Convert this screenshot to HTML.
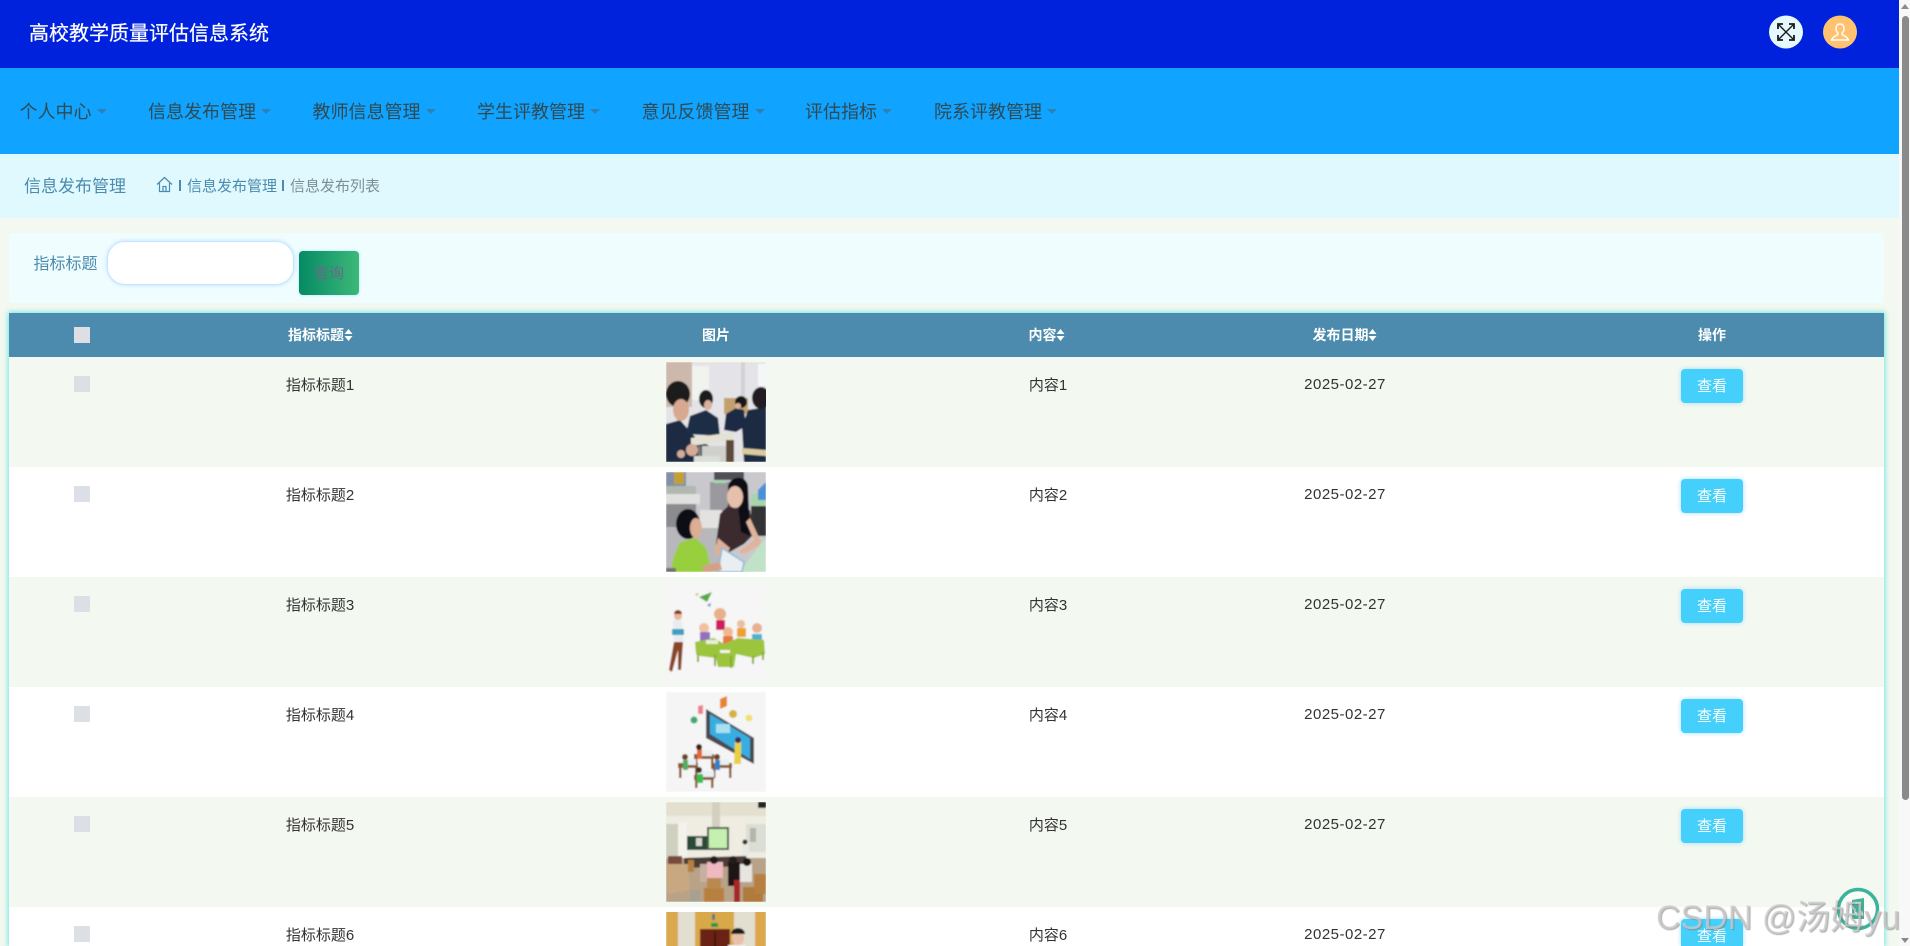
<!DOCTYPE html>
<html lang="zh-CN"><head><meta charset="utf-8"><title>高校教学质量评估信息系统</title>
<style>
*{box-sizing:border-box;margin:0;padding:0}
html,body{width:1910px;height:946px;overflow:hidden;background:#f3f8f0;font-family:"Liberation Sans","Noto Sans CJK SC",sans-serif}
.a{position:absolute;white-space:nowrap}
#page{position:relative;width:1910px;height:946px;overflow:hidden}
.nav{font-size:18px;line-height:24px;top:100px;color:#2f4a52}
.nav i{display:inline-block;width:0;height:0;border:5px solid transparent;border-top:5px solid #2b82b5;border-bottom:0;margin-left:5px;vertical-align:4px}
.cb{position:absolute;left:74px;width:16px;height:16px;background:#dcdfe6}
.row{position:absolute;left:9px;width:1875px;height:110px}
.t{position:absolute;font-size:15px;line-height:20px;color:#333;transform:translateX(-50%);white-space:nowrap}
.d{letter-spacing:.5px}
.th{position:absolute;top:325px;font-size:14px;line-height:20px;font-weight:700;color:#fff;transform:translateX(-50%);white-space:nowrap}
.th b{display:inline-block;vertical-align:-1px;width:9px;height:12px;position:relative}
.th b:before{content:"";position:absolute;left:0;top:0;border:4.500px solid transparent;border-bottom:5px solid #fff;border-top:0}
.th b:after{content:"";position:absolute;left:0;bottom:0;border:4.500px solid transparent;border-top:5px solid #fff;border-bottom:0}
.btn{position:absolute;left:1681px;width:62px;height:34px;border-radius:4px;background:#45d0fb;color:#fff;font-size:15px;line-height:36px;text-align:center;box-shadow:0 0 5px #9fdcff;overflow:hidden}
.im{position:absolute;left:666px;width:100px;height:100px;display:block}
</style></head><body><div id="page">

<div class="a" style="left:0;top:0;width:1899px;height:68px;background:#0022dd"></div>
<div class="a" style="left:29px;top:19px;font-size:20px;line-height:30px;color:#fff;-webkit-text-stroke:.2px #fff">高校教学质量评估信息系统</div>

<svg class="a" style="left:1769px;top:15px" width="34" height="34" viewBox="0 0 34 34"><ellipse cx="17" cy="17" rx="17" ry="16.5" fill="#e6f9ff"/><path d="M10 10L24 24M24 10L10 24" stroke="#1a1a1a" stroke-width="1.4" fill="none"/><path d="M9 14V9H14M20 9H25V14M25 20V25H20M14 25H9V20" stroke="#1a1a1a" stroke-width="1.8" fill="none"/></svg>
<svg class="a" style="left:1823px;top:15px" width="34" height="34" viewBox="0 0 34 34"><ellipse cx="17" cy="17" rx="17" ry="16.5" fill="#ffc271"/><path d="M17 9c-2.600 0-4 2-4 4.500 0 2 .8 3.500 1.800 4.500v1.500c-1.500 1.500-5 1.800-6.300 5.500h17c-1.300-3.700-4.800-4-6.300-5.500V18c1-1 1.800-2.500 1.800-4.500C21 11 19.600 9 17 9z" fill="none" stroke="#fff" stroke-width="1.400"/></svg>

<div class="a" style="left:0;top:68px;width:1899px;height:86px;background:#10a3ff"></div>
<div class="a nav" style="left:19.500px">个人中心<i></i></div>
<div class="a nav" style="left:148px">信息发布管理<i></i></div>
<div class="a nav" style="left:312.500px">教师信息管理<i></i></div>
<div class="a nav" style="left:477px">学生评教管理<i></i></div>
<div class="a nav" style="left:641.500px">意见反馈管理<i></i></div>
<div class="a nav" style="left:805px">评估指标<i></i></div>
<div class="a nav" style="left:934px">院系评教管理<i></i></div>

<div class="a" style="left:0;top:154px;width:1899px;height:64px;background:#dff9ff"></div>
<div class="a" style="left:24px;top:175px;font-size:17px;line-height:24px;color:#4c8bad">信息发布管理</div>
<svg class="a" style="left:156px;top:176px" width="17" height="17" viewBox="0 0 17 17"><path d="M1 8.500L8.500 1.500L16 8.500M3.500 7V15.500H13.500V7M7 15.500V10.500H10V15.500" fill="none" stroke="#4c8bad" stroke-width="1.200"/></svg>
<div class="a" style="left:179px;top:180px;width:2px;height:11px;background:#4c8bad"></div>
<div class="a" style="left:187px;top:176px;font-size:15px;line-height:22px;color:#4c8bad">信息发布管理</div>
<div class="a" style="left:282px;top:180px;width:2px;height:11px;background:#4c8bad"></div>
<div class="a" style="left:290px;top:176px;font-size:15px;line-height:22px;color:#7c8f97">信息发布列表</div>

<div class="a" style="left:9px;top:233px;width:1875px;height:70px;background:#f0fdff"></div>
<div class="a" style="left:33.500px;top:254px;font-size:16px;line-height:22px;color:#4c8bad">指标标题</div>
<div class="a" style="left:107px;top:241px;width:187px;height:44px;background:#fff;border-radius:18px;border:1px solid #c6e6ff;box-shadow:0 0 4px #b5dcff"></div>
<div class="a" style="left:299px;top:251px;width:60px;height:44px;border-radius:4px;background:linear-gradient(90deg,#058a64,#3cb878);box-shadow:0 0 3px #a8e0ff"></div>
<div class="a" style="left:314px;top:263px;font-size:15px;line-height:22px;color:#6a6a86">查询</div>

<div class="a" style="left:9px;top:313px;width:1875px;height:633px;box-shadow:0 0 5px 1px #6fe8e0"></div>
<div class="a" style="left:9px;top:313px;width:1875px;height:44px;background:#4c8bad"></div>
<div class="row" style="top:357px;background:#f3f8f0"></div>
<div class="row" style="top:467px;background:#fff"></div>
<div class="row" style="top:577px;background:#f3f8f0"></div>
<div class="row" style="top:687px;background:#fff"></div>
<div class="row" style="top:797px;background:#f3f8f0"></div>
<div class="row" style="top:907px;height:39px;background:#fff"></div>

<div class="cb" style="top:327px"></div>
<div class="th" style="left:320.500px">指标标题<b></b></div>
<div class="th" style="left:716px">图片</div>
<div class="th" style="left:1047px">内容<b></b></div>
<div class="th" style="left:1345px">发布日期<b></b></div>
<div class="th" style="left:1712px">操作</div>

<div class="cb" style="top:376px"></div><div class="t" style="left:320px;top:376px">指标标题1</div><div class="t" style="left:1048px;top:376px">内容1</div><div class="t d" style="left:1345px;top:375px">2025-02-27</div><div class="btn" style="top:369px">查看</div>
<div class="cb" style="top:486px"></div><div class="t" style="left:320px;top:486px">指标标题2</div><div class="t" style="left:1048px;top:486px">内容2</div><div class="t d" style="left:1345px;top:485px">2025-02-27</div><div class="btn" style="top:479px">查看</div>
<div class="cb" style="top:596px"></div><div class="t" style="left:320px;top:596px">指标标题3</div><div class="t" style="left:1048px;top:596px">内容3</div><div class="t d" style="left:1345px;top:595px">2025-02-27</div><div class="btn" style="top:589px">查看</div>
<div class="cb" style="top:706px"></div><div class="t" style="left:320px;top:706px">指标标题4</div><div class="t" style="left:1048px;top:706px">内容4</div><div class="t d" style="left:1345px;top:705px">2025-02-27</div><div class="btn" style="top:699px">查看</div>
<div class="cb" style="top:816px"></div><div class="t" style="left:320px;top:816px">指标标题5</div><div class="t" style="left:1048px;top:816px">内容5</div><div class="t d" style="left:1345px;top:815px">2025-02-27</div><div class="btn" style="top:809px">查看</div>
<div class="cb" style="top:926px"></div><div class="t" style="left:320px;top:926px">指标标题6</div><div class="t" style="left:1048px;top:926px">内容6</div><div class="t d" style="left:1345px;top:925px">2025-02-27</div><div class="btn" style="top:919px;height:27px;border-radius:4px 4px 0 0">查看</div>

<svg width="0" height="0" style="position:absolute"><filter id="b" x="-5%" y="-5%" width="110%" height="110%"><feGaussianBlur stdDeviation=".8"/></filter><clipPath id="c"><rect width="100" height="100"/></clipPath></svg>

<svg class="im" style="top:362px" viewBox="0 0 100 100"><g clip-path="url(#c)"><g filter="url(#b)">
<rect width="100" height="100" fill="#e4e4e8"/>
<rect width="26" height="45" fill="#cdb9ac"/><rect x="26" y="4" width="17" height="34" fill="#f1f3ee"/>
<rect x="92" y="2" width="8" height="22" fill="#f4f6f8"/><rect x="75" y="0" width="4" height="35" fill="#d2d2d6"/>
<rect x="58" y="36" width="24" height="16" fill="#c4a070"/>
<path d="M0 62L14 58 30 76 50 88 50 96 30 100H0Z" fill="#1c2b42"/>
<ellipse cx="12" cy="32" rx="12" ry="13" fill="#1a1a1c"/><ellipse cx="15" cy="48" rx="8" ry="11" fill="#d8a890"/>
<path d="M20 72L24 54 40 48 52 56 54 74Z" fill="#1e2d45"/><ellipse cx="40" cy="37" rx="7" ry="9" fill="#1c1a1c"/><ellipse cx="42" cy="43" rx="4" ry="5" fill="#d9b09c"/>
<path d="M58 68L60 52 70 46 78 48 80 64 70 70Z" fill="#1c2c44"/><ellipse cx="75" cy="40" rx="6" ry="6" fill="#181818"/><ellipse cx="72" cy="44" rx="3" ry="3" fill="#d8b09c"/>
<path d="M78 100L76 65 82 48 100 45V100Z" fill="#1c2b42"/><ellipse cx="95" cy="36" rx="9" ry="11" fill="#241e20"/>
<path d="M25 76L68 70 68 78 25 84Z" fill="#e4e2d4"/><rect x="32" y="84" width="3" height="16" fill="#7a7a78"/><rect x="60" y="78" width="8" height="22" fill="#5e4a3a"/>
<rect x="36" y="84" width="24" height="16" fill="#cfcfcc"/>
<path d="M76 86L100 88V94L76 92Z" fill="#dccaa0"/>
<rect x="28" y="94" width="26" height="6" fill="#dcdeda"/>
<ellipse cx="26" cy="88" rx="6" ry="6" fill="#d4aa98"/><ellipse cx="15" cy="92" rx="4" ry="4" fill="#d4aa98"/></g></g></svg>

<svg class="im" style="top:472px" viewBox="0 0 100 100"><g clip-path="url(#c)"><g filter="url(#b)">
<rect width="100" height="100" fill="#c9c9cd"/>
<rect width="20" height="14" fill="#8090a8"/><rect x="8" y="0" width="10" height="12" fill="#c4a030"/>
<rect x="48" y="0" width="30" height="8" fill="#505058"/><rect x="0" y="14" width="30" height="12" fill="#b0b8b0"/><rect x="0" y="22" width="34" height="10" fill="#e0e0de"/>
<rect x="0" y="32" width="30" height="28" fill="#8c8c90"/><rect x="44" y="10" width="20" height="30" fill="#9a9a9e"/><rect x="48" y="8" width="12" height="3" fill="#a8d8b0"/>
<rect x="85" y="22" width="15" height="12" fill="#a8d4ac"/><rect x="85" y="34" width="15" height="30" fill="#303034"/><path d="M92 18l8-8v18h-8z" fill="#4a90d8"/>
<rect x="0" y="55" width="60" height="45" fill="#b8b8bc"/><rect x="34" y="38" width="22" height="18" fill="#e4e2e0"/>
<path d="M50 72L54 42 62 34 84 38 88 62 78 72 60 82Z" fill="#3a2a2e"/>
<path d="M62 14C64 4 80 2 82 14L84 64 75 60 72 34 62 34Z" fill="#111114"/>
<ellipse cx="69" cy="25" rx="8" ry="11" fill="#e6c0ac"/>
<path d="M84 46L96 72 78 82 72 80 88 68 80 50Z" fill="#e0b49c"/>
<path d="M52 66L48 82 60 84 64 76Z" fill="#dcb098"/>
<path d="M74 100L96 70 100 68V100Z" fill="#c0e2c6"/>
<path d="M8 84L14 70 30 66 40 76 46 100H4Z" fill="#98cf3c"/>
<ellipse cx="22" cy="52" rx="12" ry="15" fill="#101012"/><ellipse cx="30" cy="56" rx="6" ry="10" fill="#dcae94"/>
<path d="M56 76L78 90 76 100H52Z" fill="#e8eef2" stroke="#8fb8d8" stroke-width="1.500"/>
<path d="M36 94L54 90 56 98 38 100Z" fill="#d4a088"/><rect x="0" y="96" width="10" height="4" fill="#707074"/></g></g></svg>

<svg class="im" style="top:582px" viewBox="0 0 100 100"><g clip-path="url(#c)"><g filter="url(#b)">
<rect width="100" height="100" fill="#f5f6f5"/>
<path d="M33 15L46 10 41 20Z" fill="#5aa848"/><path d="M29 12L33 11 31 14Z" fill="#c8c040"/><path d="M41 23L45 21 44 25Z" fill="#6088d0"/>
<ellipse cx="12" cy="34" rx="4" ry="4" fill="#e8b898"/><path d="M8 32a4 4 0 0 1 8 0z" fill="#8a3a20"/>
<path d="M7 38L16 38 17 60 8 60Z" fill="#e8ecf0"/><rect x="6" y="47" width="12" height="6" fill="#3aa0c0"/>
<path d="M8 60L17 60 15 88 12 88 12 68 6 90 3 88Z" fill="#8a4428"/>
<ellipse cx="54" cy="32" rx="6" ry="6" fill="#e8b088"/><rect x="50" y="38" width="9" height="10" fill="#d01c60"/>
<ellipse cx="38" cy="46" rx="5" ry="5" fill="#f0c0a0"/><rect x="34" y="50" width="10" height="9" fill="#9070c0"/>
<ellipse cx="75" cy="42" rx="4" ry="4" fill="#e8c0a0"/><rect x="71" y="46" width="9" height="9" fill="#f0a030"/>
<ellipse cx="91" cy="46" rx="5" ry="5" fill="#e8b090"/><rect x="86" y="52" width="10" height="8" fill="#50b0d0"/>
<ellipse cx="62" cy="50" rx="5" ry="5" fill="#f0b890"/><rect x="57" y="54" width="10" height="8" fill="#e87840"/>
<path d="M29 60L48 56 58 62 72 56 98 58 99 72 88 76 70 72 68 85 52 85 50 76 34 74 30 72Z" fill="#9cc53c"/>
<path d="M31 72h2v8h-2zM48 72h2v12h-2zM64 74h2v12h-2zM86 74h2v8h-2zM96 70h2v8h-2z" fill="#86ac2e"/>
<rect x="40" y="58" width="12" height="4" fill="#e8f0d8"/><rect x="54" y="68" width="10" height="3" fill="#f4f4e8"/></g></g></svg>

<svg class="im" style="top:692px" viewBox="0 0 100 100"><g clip-path="url(#c)"><g filter="url(#b)">
<rect width="100" height="100" fill="#f5f5f5"/>
<path d="M54 7L61 4 61 14 54 17Z" fill="#e8842a"/>
<path d="M32 14L37 13 37 22 32 22Z" fill="#f08088"/>
<circle cx="28" cy="28" r="3.500" fill="#40a870"/>
<circle cx="67" cy="22" r="4" fill="#d8b040"/><circle cx="83" cy="26" r="3.500" fill="#f0e070"/>
<path d="M40 17L88 46 88 72 40 46Z" fill="#4a4a50"/><path d="M44 22L84 46 84 67 44 42Z" fill="#38aee0"/>
<rect x="50" y="32" width="14" height="9" fill="#a8e0f0"/>
<path d="M69 50L75 50 75 72 68 72Z" fill="#e8d040"/><circle cx="72" cy="48" r="3" fill="#402860"/>
<g fill="#8a5a30"><rect x="28" y="62" width="20" height="5"/><rect x="12" y="71" width="20" height="5"/><rect x="46" y="71" width="20" height="5"/><rect x="28" y="83" width="20" height="5"/>
<rect x="29" y="67" width="2.500" height="10"/><rect x="45" y="67" width="2.500" height="10"/><rect x="13" y="76" width="2.500" height="10"/><rect x="29" y="76" width="2.500" height="10"/><rect x="47" y="76" width="2.500" height="10"/><rect x="63" y="76" width="2.500" height="10"/><rect x="29" y="88" width="2.500" height="8"/><rect x="45" y="88" width="2.500" height="8"/></g>
<rect x="33" y="58" width="13" height="6" fill="#e8f0f4"/><rect x="17" y="67" width="13" height="6" fill="#e8f0f4"/><rect x="50" y="67" width="13" height="6" fill="#e8f0f4"/><rect x="35" y="79" width="13" height="6" fill="#e8f0f4"/>
<rect x="31" y="57" width="5" height="10" fill="#e86838"/><circle cx="33" cy="55" r="3" fill="#302020"/>
<rect x="17" y="68" width="5" height="10" fill="#50b060"/><circle cx="19" cy="65" r="3" fill="#704020"/>
<rect x="49" y="68" width="5" height="10" fill="#3080c8"/><circle cx="51" cy="65" r="3" fill="#704020"/>
<rect x="31" y="82" width="6" height="9" fill="#30c050"/><circle cx="33" cy="78" r="3" fill="#403020"/></g></g></svg>

<svg class="im" style="top:802px" viewBox="0 0 100 100"><g clip-path="url(#c)"><g filter="url(#b)">
<rect width="100" height="100" fill="#efece2"/>
<rect width="100" height="14" fill="#e4e0d0"/><rect x="92" y="0" width="8" height="6" fill="#28241e"/>
<rect x="46" y="0" width="8" height="25" fill="#d4d0c0"/>
<rect x="0" y="22" width="12" height="34" fill="#cfd0c0"/><rect x="12" y="20" width="9" height="36" fill="#f4f2ea"/>
<rect x="80" y="22" width="20" height="28" fill="#dcded6"/><rect x="84" y="26" width="6" height="14" fill="#b0b8a8"/>
<rect x="21" y="34" width="20" height="14" fill="#2a4838"/><rect x="30" y="36" width="6" height="8" fill="#d8d8d0"/>
<rect x="41" y="25" width="22" height="23" fill="#4c5848"/><rect x="43" y="27" width="18" height="19" fill="#c4f0b0"/>
<rect x="0" y="56" width="100" height="44" fill="#b8a288"/>
<rect x="76" y="40" width="7" height="18" fill="#e8e8e4"/><circle cx="79" cy="40" r="2.500" fill="#403028"/>
<path d="M18 56L80 54 82 64 18 66Z" fill="#4a3a36"/>
<rect x="2" y="54" width="14" height="8" fill="#7a4a3c"/>
<path d="M0 62L22 62 24 88 4 92 0 90Z" fill="#c8a880"/>
<rect x="22" y="58" width="6" height="12" fill="#b88040"/>
<rect x="34" y="62" width="8" height="18" fill="#c8b0a0"/>
<rect x="41" y="60" width="16" height="16" fill="#f0b8c0"/><circle cx="48" cy="58" r="4" fill="#241c1c"/>
<rect x="62" y="60" width="12" height="24" fill="#1a1418"/><circle cx="67" cy="58" r="4" fill="#241c1c"/>
<rect x="74" y="62" width="12" height="18" fill="#e8e4e0"/><circle cx="81" cy="60" r="4" fill="#181414"/>
<rect x="41" y="76" width="14" height="11" fill="#b88a50"/>
<rect x="38" y="86" width="20" height="14" fill="#b88040"/>
<rect x="77" y="85" width="20" height="15" fill="#b07a3a"/>
<rect x="88" y="72" width="12" height="20" fill="#b88040"/>
<rect x="68" y="78" width="6" height="22" fill="#a82828"/>
<rect x="24" y="88" width="10" height="12" fill="#a8a090"/></g></g></svg>

<svg class="im" style="top:912px;height:34px" viewBox="0 0 100 34"><g clip-path="url(#c)"><g filter="url(#b)">
<rect y="-5" width="100" height="50" fill="#dca84e"/>
<rect x="12" y="-5" width="17" height="50" fill="#e2dfd0"/><rect x="68" y="-5" width="21" height="50" fill="#e2dfd0"/>
<rect x="32" y="-5" width="36" height="50" fill="#d8a848"/>
<rect x="34" y="17" width="30" height="28" fill="#6a2418"/><rect x="48" y="20" width="2" height="25" fill="#3c140c"/>
<rect x="45" y="11" width="7" height="4" fill="#289848"/><rect x="46" y="2" width="3" height="6" fill="#607890"/>
<ellipse cx="72" cy="26" rx="6" ry="8" fill="#e8c0a8"/><path d="M65 22a7 6 0 0 1 14 0z" fill="#1c1a1a"/><rect x="62" y="33" width="18" height="10" fill="#f0f0ee"/></g></g></svg>

<!-- scrollbar -->
<div class="a" style="left:1899px;top:0;width:11px;height:946px;background:#f8f8f8"></div>
<div class="a" style="left:1902px;top:16px;width:7px;height:784px;background:#8b8b8b;border-radius:4px"></div>
<div class="a" style="left:1901px;top:4px;width:0;height:0;border:4px solid transparent;border-bottom:5px solid #8b8b8b;border-top:0"></div>
<div class="a" style="left:1901px;top:938px;width:0;height:0;border:4px solid transparent;border-top:5px solid #8b8b8b;border-bottom:0"></div>

<!-- floating circle -->
<svg class="a" style="left:1836px;top:887px" width="44" height="44" viewBox="0 0 44 44"><circle cx="22" cy="22" r="19.500" fill="rgba(255,255,255,.55)" stroke="#3cb39b" stroke-width="3.500"/><path d="M16 13L28 11V32H16Z" fill="#3cb39b"/><path d="M19 16l6 0M19 24l2 5M25 24l2 5" stroke="#dff5ee" stroke-width="2"/></svg>

<!-- watermark -->
<div class="a" style="left:1656px;top:896px;height:44px;font-size:34px;line-height:44px;color:rgba(205,205,205,.75);text-shadow:1px 1px 1px rgba(120,120,120,.6)">CSDN @汤姆yu</div>

</div></body></html>
